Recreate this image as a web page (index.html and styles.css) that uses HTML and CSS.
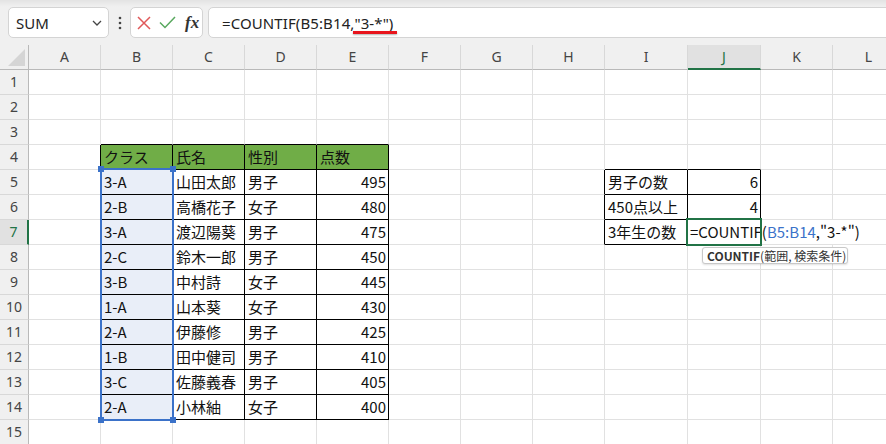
FILE: index.html
```html
<!DOCTYPE html>
<html lang="ja">
<head>
    <meta charset="UTF-8">
    <title>COUNTIF</title>
    <link rel="stylesheet" href="styles.css">
</head>
<body>
    <div class="formula-bar">
        <div class="name-box">
            <span>SUM</span>
            <svg width="10" height="6" viewBox="0 0 10 6"><polyline points="1,1 5,5 9,1" fill="none" stroke="#444" stroke-width="1.3"/></svg>
        </div>
        <div class="dots">
            <svg width="4" height="14" viewBox="0 0 4 14"><circle cx="2" cy="2" r="1.3" fill="#444"/><circle cx="2" cy="7" r="1.3" fill="#444"/><circle cx="2" cy="12" r="1.3" fill="#444"/></svg>
        </div>
        <div class="fx-box">
            <svg width="14" height="14" viewBox="0 0 14 14"><path d="M1 1L13 13M13 1L1 13" stroke="#e0595a" stroke-width="1.5" fill="none"/></svg>
            <svg width="17" height="13" viewBox="0 0 17 13"><polyline points="1,6.5 6,11.5 16,1" stroke="#58a85e" stroke-width="1.5" fill="none"/></svg>
            <span class="fx">fx</span>
        </div>
        <div class="formula-input">
            <span>=COUNTIF(B5:B14,"3-*")</span>
            <div class="mark"></div>
        </div>
    </div>

    <div class="sheet">
        <div class="corner"><svg width="29" height="25" viewBox="0 0 29 25"><polygon points="25,4 25,21 8,21" fill="#d5d5d5"/></svg></div>
        <div class="col-head">A</div><div class="col-head">B</div><div class="col-head">C</div><div class="col-head">D</div>
        <div class="col-head">E</div><div class="col-head">F</div><div class="col-head">G</div><div class="col-head">H</div>
        <div class="col-head">I</div><div class="col-head on">J</div><div class="col-head">K</div><div class="col-head">L</div>

        <!-- 1 -->
        <div class="row-head">1</div>
        <div class="cell"></div><div class="cell"></div><div class="cell"></div><div class="cell"></div><div class="cell"></div><div class="cell"></div>
        <div class="cell"></div><div class="cell"></div><div class="cell"></div><div class="cell"></div><div class="cell"></div><div class="cell"></div>
        <!-- 2 -->
        <div class="row-head">2</div>
        <div class="cell"></div><div class="cell"></div><div class="cell"></div><div class="cell"></div><div class="cell"></div><div class="cell"></div>
        <div class="cell"></div><div class="cell"></div><div class="cell"></div><div class="cell"></div><div class="cell"></div><div class="cell"></div>
        <!-- 3 -->
        <div class="row-head">3</div>
        <div class="cell"></div><div class="cell line-b"></div><div class="cell line-b"></div><div class="cell line-b"></div><div class="cell line-b"></div><div class="cell"></div>
        <div class="cell"></div><div class="cell"></div><div class="cell"></div><div class="cell"></div><div class="cell"></div><div class="cell"></div>
        <!-- 4 -->
        <div class="row-head">4</div>
        <div class="cell line-r"></div>
        <div class="cell tbl th">クラス</div><div class="cell tbl th">氏名</div><div class="cell tbl th">性別</div><div class="cell tbl th">点数</div>
        <div class="cell"></div><div class="cell"></div><div class="cell"></div>
        <div class="cell line-b"></div><div class="cell line-b"></div><div class="cell"></div><div class="cell"></div>
        <!-- 5 -->
        <div class="row-head">5</div>
        <div class="cell line-r"></div>
        <div class="cell tbl pick range-start">3-A
            <div class="range"><i class="handle tl"></i><i class="handle tr"></i><i class="handle bl"></i><i class="handle br"></i></div>
        </div>
        <div class="cell tbl">山田太郎</div><div class="cell tbl">男子</div><div class="cell tbl num">495</div>
        <div class="cell"></div><div class="cell"></div><div class="cell line-r"></div>
        <div class="cell tbl">男子の数</div><div class="cell tbl num">6</div><div class="cell"></div><div class="cell"></div>
        <!-- 6 -->
        <div class="row-head">6</div>
        <div class="cell line-r"></div>
        <div class="cell tbl pick">2-B</div><div class="cell tbl">高橋花子</div><div class="cell tbl">女子</div><div class="cell tbl num">480</div>
        <div class="cell"></div><div class="cell"></div><div class="cell line-r"></div>
        <div class="cell tbl">450点以上</div><div class="cell tbl num">4</div><div class="cell"></div><div class="cell"></div>
        <!-- 7 -->
        <div class="row-head on">7</div>
        <div class="cell line-r"></div>
        <div class="cell tbl pick">3-A</div><div class="cell tbl">渡辺陽葵</div><div class="cell tbl">男子</div><div class="cell tbl num">475</div>
        <div class="cell"></div><div class="cell"></div><div class="cell line-r"></div>
        <div class="cell tbl">3年生の数</div>
        <div class="cell tbl active">
            <div class="editor">=COUNTIF(<span class="ref">B5:B14</span>,"3-*")</div>
            <div class="focus"></div>
            <div class="tip"><b>COUNTIF</b>(範囲, 検索条件)</div>
        </div>
        <div class="cell"></div><div class="cell"></div>
        <!-- 8 -->
        <div class="row-head">8</div>
        <div class="cell line-r"></div>
        <div class="cell tbl pick">2-C</div><div class="cell tbl">鈴木一郎</div><div class="cell tbl">男子</div><div class="cell tbl num">450</div>
        <div class="cell"></div><div class="cell"></div><div class="cell"></div><div class="cell"></div><div class="cell"></div><div class="cell"></div><div class="cell"></div>
        <!-- 9 -->
        <div class="row-head">9</div>
        <div class="cell line-r"></div>
        <div class="cell tbl pick">3-B</div><div class="cell tbl">中村詩</div><div class="cell tbl">女子</div><div class="cell tbl num">445</div>
        <div class="cell"></div><div class="cell"></div><div class="cell"></div><div class="cell"></div><div class="cell"></div><div class="cell"></div><div class="cell"></div>
        <!-- 10 -->
        <div class="row-head">10</div>
        <div class="cell line-r"></div>
        <div class="cell tbl pick">1-A</div><div class="cell tbl">山本葵</div><div class="cell tbl">女子</div><div class="cell tbl num">430</div>
        <div class="cell"></div><div class="cell"></div><div class="cell"></div><div class="cell"></div><div class="cell"></div><div class="cell"></div><div class="cell"></div>
        <!-- 11 -->
        <div class="row-head">11</div>
        <div class="cell line-r"></div>
        <div class="cell tbl pick">2-A</div><div class="cell tbl">伊藤修</div><div class="cell tbl">男子</div><div class="cell tbl num">425</div>
        <div class="cell"></div><div class="cell"></div><div class="cell"></div><div class="cell"></div><div class="cell"></div><div class="cell"></div><div class="cell"></div>
        <!-- 12 -->
        <div class="row-head">12</div>
        <div class="cell line-r"></div>
        <div class="cell tbl pick">1-B</div><div class="cell tbl">田中健司</div><div class="cell tbl">男子</div><div class="cell tbl num">410</div>
        <div class="cell"></div><div class="cell"></div><div class="cell"></div><div class="cell"></div><div class="cell"></div><div class="cell"></div><div class="cell"></div>
        <!-- 13 -->
        <div class="row-head">13</div>
        <div class="cell line-r"></div>
        <div class="cell tbl pick">3-C</div><div class="cell tbl">佐藤義春</div><div class="cell tbl">男子</div><div class="cell tbl num">405</div>
        <div class="cell"></div><div class="cell"></div><div class="cell"></div><div class="cell"></div><div class="cell"></div><div class="cell"></div><div class="cell"></div>
        <!-- 14 -->
        <div class="row-head">14</div>
        <div class="cell line-r"></div>
        <div class="cell tbl pick">2-A</div><div class="cell tbl">小林紬</div><div class="cell tbl">女子</div><div class="cell tbl num">400</div>
        <div class="cell"></div><div class="cell"></div><div class="cell"></div><div class="cell"></div><div class="cell"></div><div class="cell"></div><div class="cell"></div>
        <!-- 15 -->
        <div class="row-head">15</div>
        <div class="cell"></div><div class="cell"></div><div class="cell"></div><div class="cell"></div><div class="cell"></div><div class="cell"></div>
        <div class="cell"></div><div class="cell"></div><div class="cell"></div><div class="cell"></div><div class="cell"></div><div class="cell"></div>
    </div>
</body>
</html>
```

FILE: styles.css
```css
* {
    margin: 0;
    padding: 0;
    box-sizing: border-box;
}

body {
    width: 886px;
    height: 444px;
    overflow: hidden;
    background: #f0f0f0;
    font-family: 'Noto Sans', sans-serif;
    color: #222;
}

/* formula bar */
.formula-bar {
    height: 45px;
    display: flex;
    align-items: flex-start;
    padding: 7px 0 0 8px;
    background: linear-gradient(to bottom, #e3e3e3 0, #ededed 5px, #f0f0f0 7px);
}

.name-box {
    width: 101px;
    height: 31px;
    background: #fff;
    border: 1px solid #d4d4d4;
    border-radius: 5px;
    display: flex;
    align-items: center;
    justify-content: space-between;
    padding: 0 6px 0 7px;
    font-size: 15px;
}

.dots {
    width: 21px;
    height: 31px;
    display: flex;
    align-items: center;
    justify-content: center;
}

.fx-box {
    width: 73px;
    height: 31px;
    margin-right: 5px;
    background: #fff;
    border: 1px solid #d4d4d4;
    border-radius: 5px;
    display: flex;
    align-items: center;
    padding-left: 6px;
    gap: 8px;
}

.fx {
    font-family: 'Liberation Serif', serif;
    font-style: italic;
    font-weight: bold;
    font-size: 17px;
    color: #333;
    margin-left: 1px;
}

.formula-input {
    flex: 1;
    height: 31px;
    margin-right: -8px;
    background: #fff;
    border: 1px solid #d4d4d4;
    border-radius: 5px;
    display: flex;
    align-items: center;
    padding-left: 13px;
    font-size: 15px;
    letter-spacing: 0.1px;
    position: relative;
}

.mark {
    position: absolute;
    left: 144px;
    top: 23px;
    width: 44px;
    height: 3px;
    background: #e8141c;
    box-shadow: 0 1px 2px rgba(0, 0, 0, 0.3);
}

/* grid */
.sheet {
    display: grid;
    grid-template-columns: 29px repeat(8, 72px) 83px 73px 72px 72px;
    grid-template-rows: repeat(16, 25px);
    background: #fff;
}

.corner {
    background: #f0f0f0;
    border-right: 1px solid #b9b9b9;
    border-bottom: 1px solid #b9b9b9;
}

.col-head {
    background: #f0f0f0;
    border-right: 1px solid #d8d8d8;
    border-bottom: 1px solid #b9b9b9;
    text-align: center;
    font-size: 14px;
    line-height: 24px;
    color: #444;
}

.row-head {
    background: #f0f0f0;
    border-right: 1px solid #b9b9b9;
    border-bottom: 1px solid #d8d8d8;
    text-align: center;
    font-size: 14px;
    line-height: 24px;
    color: #444;
}

.col-head.on {
    background: #e1e1e1;
    border-bottom: 2px solid #217346;
    color: #217346;
}

.row-head.on {
    background: #e1e1e1;
    border-right: 2px solid #217346;
    color: #217346;
}

.cell {
    border-right: 1px solid #e1e1e1;
    border-bottom: 1px solid #e1e1e1;
    padding: 0 3px;
    font-family: 'Noto Sans CJK JP', sans-serif;
    font-size: 15px;
    line-height: 24px;
    color: #111;
    white-space: nowrap;
}

.line-r { border-right-color: #000; }
.line-b { border-bottom-color: #000; }

.tbl {
    border-right-color: #000;
    border-bottom-color: #000;
}

.th { background: #70ad47; }
.pick { background: #e9eef8; }
.num { text-align: right; padding-right: 2px; }

/* range reference box */
.range-start { position: relative; }

.range {
    position: absolute;
    left: -1px;
    top: -2px;
    width: 74px;
    height: 253px;
    border: 2px solid #3b72c9;
}

.handle {
    position: absolute;
    width: 6px;
    height: 6px;
    background: #3b72c9;
}

.handle.tl { left: -4px; top: -4px; }
.handle.tr { right: -4px; top: -4px; }
.handle.bl { left: -4px; bottom: -4px; }
.handle.br { right: -4px; bottom: -4px; }

/* cell in edit mode */
.active { position: relative; }

.editor {
    position: absolute;
    left: 0;
    top: 0;
    height: 24px;
    padding: 0 6px 0 2px;
    background: #fff;
    z-index: 2;
}

.ref { color: #3b72c9; }

.focus {
    position: absolute;
    left: -2px;
    top: -2px;
    right: -2px;
    bottom: -2px;
    border: 2px solid #217346;
    z-index: 3;
}

.tip {
    position: absolute;
    left: 14px;
    top: 27px;
    height: 17px;
    padding: 0 1px 0 4px;
    background: #fff;
    border: 1px solid #c8c8c8;
    border-radius: 3px;
    box-shadow: 0 1px 2px rgba(0, 0, 0, 0.12);
    font-size: 12px;
    line-height: 15px;
    color: #333;
    white-space: nowrap;
    z-index: 4;
}

.tip b { font-weight: bold; }
```
